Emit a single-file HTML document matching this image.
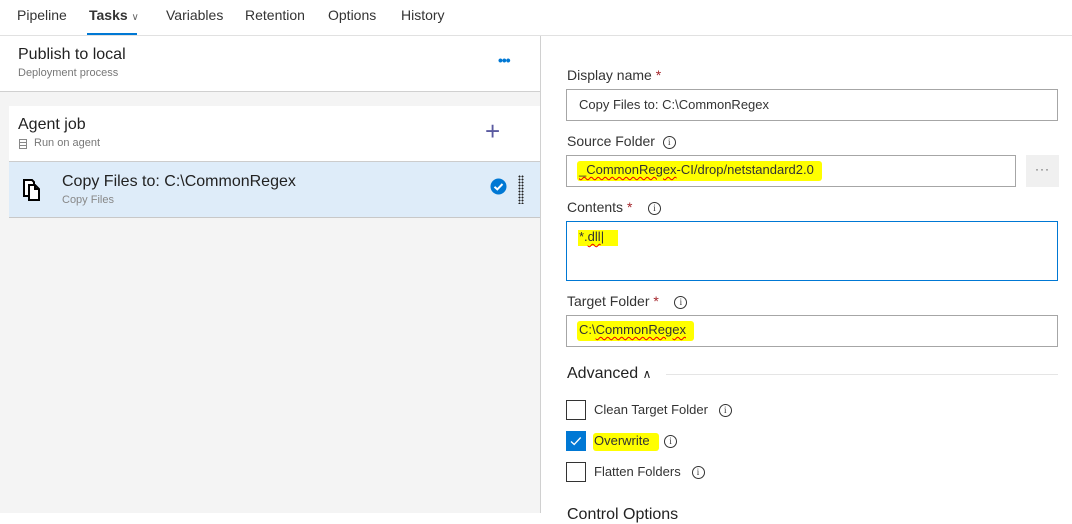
<!DOCTYPE html>
<html><head><meta charset="utf-8"><style>
*{box-sizing:border-box;margin:0;padding:0}
body{width:1072px;height:513px;overflow:hidden;background:#fff;font-family:"Segoe UI","Liberation Sans",sans-serif;color:#333;position:relative}
.a{position:absolute;white-space:nowrap}
.nav{font-size:14px;top:7px;color:#333}
.box{position:absolute;border:1px solid #a6a6a6;background:#fff}
.lbl{font-size:14px;color:#333}
.req{color:#a4262c}
.info{display:inline-block;width:13px;height:13px;border:1px solid #333;border-radius:50%;font-size:9px;line-height:11px;text-align:center;font-family:"Liberation Serif",serif;vertical-align:1px}
.cb{position:absolute;width:20px;height:20px;border:1px solid #333;background:#fff}
.sq{text-decoration:underline wavy #e00;text-decoration-thickness:1px;text-underline-offset:2px}
</style></head><body>
<div class="a nav" style="left:17px">Pipeline</div>
<div class="a nav" style="left:89px;font-weight:600">Tasks <span style="font-size:10px;font-weight:400;color:#666">&#8744;</span></div>
<div class="a" style="left:87px;top:33px;width:50px;height:2px;background:#0078d4"></div>
<div class="a nav" style="left:166px">Variables</div>
<div class="a nav" style="left:245px">Retention</div>
<div class="a nav" style="left:328px">Options</div>
<div class="a nav" style="left:401px">History</div>
<div class="a" style="left:0;top:35px;width:1072px;height:1px;background:#e1e1e1"></div>

<div class="a" style="left:0;top:91px;width:540px;height:422px;background:#f4f4f4;border-top:1px solid #d0d0d0"></div>
<div class="a" style="left:540px;top:36px;width:1px;height:477px;background:#d0d0d0"></div>
<div class="a" style="left:18px;top:46px;font-size:16px;color:#222">Publish to local</div>
<div class="a" style="left:18px;top:67px;font-size:11px;color:#777">Deployment process</div>
<div class="a" style="left:498px;top:52px;font-size:14px;color:#0078d4;font-weight:bold;letter-spacing:-1px">•••</div>

<div class="a" style="left:9px;top:106px;width:531px;height:56px;background:#fff;border-bottom:1px solid #ccc"></div>
<div class="a" style="left:18px;top:116px;font-size:16px;color:#222">Agent job</div>
<div class="a" style="left:19px;top:139px;width:8px;height:10px;border:1px solid #888;background:repeating-linear-gradient(#fff 0 2px,#888 2px 3px)"></div>
<div class="a" style="left:34px;top:137px;font-size:11px;color:#777">Run on agent</div>
<div class="a" style="left:485px;top:116px;font-size:26px;font-weight:200;color:#5a5aa0;line-height:30px">+</div>

<div class="a" style="left:9px;top:162px;width:531px;height:56px;background:#deecf9;border-bottom:1px solid #c8c8c8"></div>
<svg class="a" style="left:22px;top:178px" width="24" height="24" viewBox="0 0 24 24"><path d="M2 2h8l2 2v14H2z" fill="#fff" stroke="#000" stroke-width="2"/><path d="M7 7h6l4 4v11H7z" fill="#fff" stroke="#000" stroke-width="2"/><path d="M13 7v4h4" fill="none" stroke="#000" stroke-width="2"/></svg>
<div class="a" style="left:62px;top:173px;font-size:16px;color:#222">Copy Files to: C:\CommonRegex</div>
<div class="a" style="left:62px;top:194px;font-size:11px;color:#888">Copy Files</div>
<svg class="a" style="left:490px;top:178px" width="17" height="17" viewBox="0 0 17 17"><circle cx="8.5" cy="8.5" r="8" fill="#0078d4"/><path d="M4.5 8.8l2.8 2.6 5.2-5.4" fill="none" stroke="#fff" stroke-width="2"/></svg>
<div class="a" style="left:518px;top:175px;width:6px;height:29px;background:radial-gradient(circle,#222 0.9px,transparent 1.1px) 0 0/3px 3px"></div>

<div class="a lbl" style="left:567px;top:67px">Display name <span class="req">*</span></div>
<div class="box" style="left:566px;top:89px;width:492px;height:32px"></div>
<div class="a" style="left:579px;top:97px;font-size:13px">Copy Files to: C:\CommonRegex</div>

<div class="a lbl" style="left:567px;top:133px">Source Folder &nbsp;<span class="info">i</span></div>
<div class="box" style="left:566px;top:155px;width:450px;height:32px"></div>
<div class="a" style="left:577px;top:161px;height:20px;width:245px;background:#ff0;border-radius:3px"></div>
<div class="a" style="left:579px;top:162px;font-size:13px"><span class="sq">_CommonRegex</span>-CI/drop/netstandard2.0</div>
<div class="a" style="left:1026px;top:155px;width:33px;height:32px;background:#f0f0f0;text-align:center;font-size:12px;line-height:28px;color:#555;letter-spacing:1px">···</div>

<div class="a lbl" style="left:567px;top:199px">Contents <span class="req">*</span> &nbsp;&nbsp;&nbsp;<span class="info">i</span></div>
<div class="a" style="left:566px;top:221px;width:492px;height:60px;border:1px solid #0078d4"></div>
<div class="a" style="left:578px;top:230px;width:40px;height:16px;background:#ff0"></div>
<div class="a" style="left:579px;top:229px;font-size:13px">*.<span class="sq">dll</span>|</div>

<div class="a lbl" style="left:567px;top:293px">Target Folder <span class="req">*</span> &nbsp;&nbsp;&nbsp;<span class="info">i</span></div>
<div class="box" style="left:566px;top:315px;width:492px;height:32px"></div>
<div class="a" style="left:577px;top:321px;width:117px;height:20px;background:#ff0;border-radius:3px"></div>
<div class="a" style="left:579px;top:322px;font-size:13px">C:\<span class="sq">CommonRegex</span></div>

<div class="a" style="left:567px;top:365px;font-size:16px;color:#222">Advanced <span style="font-size:12px">&#8743;</span></div>
<div class="a" style="left:666px;top:374px;width:392px;height:1px;background:#e5e5e5"></div>

<div class="cb" style="left:566px;top:400px"></div>
<div class="a lbl" style="left:594px;top:402px;font-size:13px">Clean Target Folder &nbsp;&nbsp;<span class="info">i</span></div>
<div class="cb" style="left:566px;top:431px;background:#0078d4;border-color:#0078d4"><svg width="18" height="18" viewBox="0 0 18 18" style="position:absolute;left:0;top:0"><path d="M4 9.5l3.2 3 6.5-7" fill="none" stroke="#fff" stroke-width="1.3"/></svg></div>
<div class="a" style="left:593px;top:433px;width:66px;height:18px;background:#ff0;border-radius:3px"></div>
<div class="a lbl" style="left:594px;top:433px;font-size:13px">Overwrite &nbsp;&nbsp;&nbsp;<span class="info">i</span></div>
<div class="cb" style="left:566px;top:462px"></div>
<div class="a lbl" style="left:594px;top:464px;font-size:13px">Flatten Folders &nbsp;&nbsp;<span class="info">i</span></div>
<div class="a" style="left:567px;top:506px;font-size:16px;color:#222">Control Options</div>
</body></html>
